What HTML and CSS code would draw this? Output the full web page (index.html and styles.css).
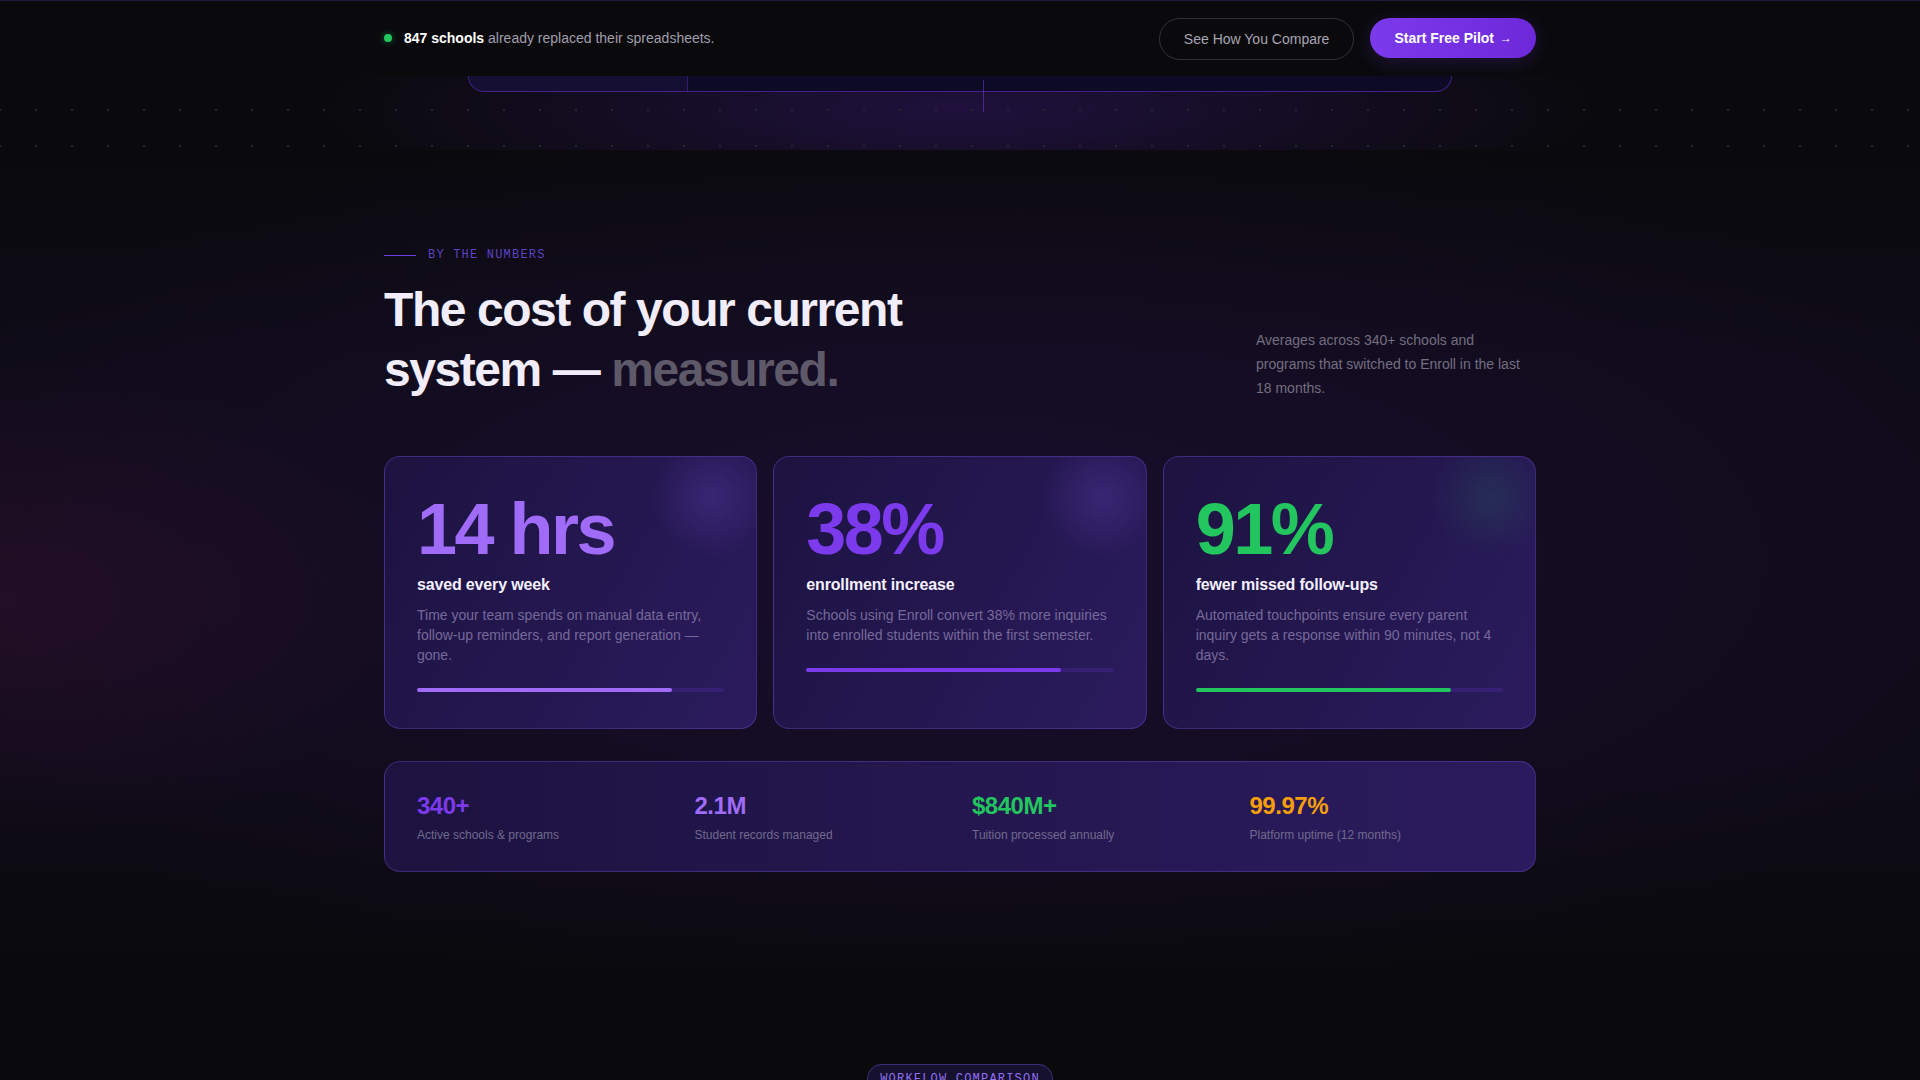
FILE: index.html
```html
<!DOCTYPE html>
<html lang="en">

<head>
    <meta charset="utf-8">
    <title>Enroll — By the numbers</title>
    <link rel="stylesheet" href="styles.css">
</head>

<body>
    <header class="topbar">
        <div class="topbar-inner">
            <p class="proof">
                <span class="live-dot"></span>
                <span><strong>847 schools</strong> already replaced their spreadsheets.</span>
            </p>
            <div class="topbar-actions">
                <a class="btn btn-ghost">See How You Compare</a>
                <a class="btn btn-primary">Start Free Pilot <span class="arrow">→</span></a>
            </div>
        </div>
    </header>

    <!-- bottom of the hero: product window peeking out -->
    <section class="hero">
        <div class="mock">
            <div class="mock-side"></div>
            <div class="mock-main"><span class="mock-tick"></span></div>
        </div>
    </section>

    <section class="numbers">
        <div class="container">
            <div class="numbers-head">
                <div>
                    <p class="eyebrow">By the numbers</p>
                    <h2 class="numbers-title">The cost of your current<br>system — <span class="muted">measured.</span></h2>
                </div>
                <p class="numbers-note">Averages across 340+ schools and programs that switched to Enroll in the last 18 months.</p>
            </div>

            <div class="stat-cards">
                <div class="stat-card lilac">
                    <div class="stat-value">14 hrs</div>
                    <h3 class="stat-label">saved every week</h3>
                    <p class="stat-desc">Time your team spends on manual data entry, follow-up reminders, and report generation — gone.</p>
                    <div class="stat-bar"><span style="width: 83%"></span></div>
                </div>
                <div class="stat-card violet">
                    <div class="stat-value">38%</div>
                    <h3 class="stat-label">enrollment increase</h3>
                    <p class="stat-desc">Schools using Enroll convert 38% more inquiries into enrolled students within the first semester.</p>
                    <div class="stat-bar"><span style="width: 83%"></span></div>
                </div>
                <div class="stat-card green">
                    <div class="stat-value">91%</div>
                    <h3 class="stat-label">fewer missed follow-ups</h3>
                    <p class="stat-desc">Automated touchpoints ensure every parent inquiry gets a response within 90 minutes, not 4 days.</p>
                    <div class="stat-bar"><span style="width: 83%"></span></div>
                </div>
            </div>

            <div class="stat-strip">
                <div class="strip-item">
                    <div class="strip-value violet">340+</div>
                    <div class="strip-label">Active schools &amp; programs</div>
                </div>
                <div class="strip-item">
                    <div class="strip-value lilac">2.1M</div>
                    <div class="strip-label">Student records managed</div>
                </div>
                <div class="strip-item">
                    <div class="strip-value green">$840M+</div>
                    <div class="strip-label">Tuition processed annually</div>
                </div>
                <div class="strip-item">
                    <div class="strip-value amber">99.97%</div>
                    <div class="strip-label">Platform uptime (12 months)</div>
                </div>
            </div>
        </div>
    </section>

    <section class="workflow">
        <span class="pill">Workflow comparison</span>
    </section>
</body>

</html>
```

FILE: styles.css
```css
* {
    box-sizing: border-box;
}

body {
    margin: 0;
    background-color: #0a0a0d;
    font-family: "Liberation Sans", Arial, sans-serif;
    color: #f1edfb;
}

.container {
    max-width: 1152px;
    margin: 0 auto;
}

/* Sticky social proof bar */
.topbar {
    position: fixed;
    top: 0;
    left: 0;
    right: 0;
    z-index: 10;
    height: 76px;
    background-color: #0a0a0d;
    border-top: 1px solid #1f1a3a;
}

.topbar-inner {
    max-width: 1152px;
    height: 100%;
    margin: 0 auto;
    display: flex;
    align-items: center;
    justify-content: space-between;
}

.proof {
    margin: 0 0 1px;
    display: flex;
    align-items: center;
    gap: 12px;
    font-size: 14px;
    color: #a19dab;
}

.proof strong {
    color: #ffffff;
}

.live-dot {
    width: 8px;
    height: 8px;
    border-radius: 50%;
    background-color: #22c55e;
    box-shadow: 0 0 6px rgba(34, 197, 94, 0.5);
}

.topbar-actions {
    display: flex;
    gap: 16px;
}

.btn {
    display: inline-flex;
    align-items: center;
    gap: 6px;
    height: 42px;
    padding: 0 24px;
    border-radius: 999px;
    font-size: 14px;
    text-decoration: none;
    cursor: pointer;
}

.btn-ghost {
    border: 1px solid rgba(255, 255, 255, 0.16);
    color: #a8a4b2;
}

.btn-primary {
    height: 40px;
    background: linear-gradient(90deg, #7c3aed, #6d28d9);
    color: #ffffff;
    font-weight: 700;
    box-shadow: 0 4px 18px rgba(124, 58, 237, 0.2);
}

.arrow {
    font-size: 12px;
    font-weight: 400;
}

/* Hero tail with dotted grid */
.hero {
    height: 150px;
    overflow: hidden;
    display: flex;
    justify-content: center;
    background:
        radial-gradient(circle, #26242f 1px, transparent 1.6px) -18px -16px / 36px 36px,
        radial-gradient(ellipse 640px 120px at 50% 110px, rgba(80, 32, 170, 0.3), transparent),
        #0a0a0d;
}

.mock {
    position: relative;
    display: flex;
    width: 984px;
    height: 92px;
    background-color: #0c0a24;
    border: 1px solid rgba(124, 58, 237, 0.5);
    border-top: 0;
    border-radius: 0 0 16px 16px;
}

.mock-side {
    width: 219px;
    background-color: #150f33;
    border-right: 1px solid rgba(124, 58, 237, 0.3);
    border-bottom-left-radius: 16px;
}

.mock-main {
    flex: 1;
    position: relative;
}

/* connector line that runs past the window edge */
.mock::after {
    content: "";
    position: absolute;
    left: 514px;
    top: 80px;
    width: 1px;
    height: 32px;
    background-color: rgba(124, 58, 237, 0.5);
}

.mock-tick {
    position: absolute;
    right: 20px;
    top: 75px;
    width: 18px;
    height: 1px;
    background-color: rgba(124, 58, 237, 0.6);
}

/* By the numbers */
.numbers {
    padding: 96px 0;
    background:
        radial-gradient(ellipse 22% 30% at 0% 55%, rgba(150, 30, 110, 0.14), transparent),
        radial-gradient(ellipse 60% 55% at 50% 50%, rgba(76, 29, 149, 0.18), transparent),
        linear-gradient(#0a0a0d, #0e0b17 25%, #0e0b17 75%, #0a0a0d);
}

.numbers-head {
    display: flex;
    justify-content: space-between;
    align-items: flex-end;
}

.eyebrow {
    margin: 0 0 16px;
    display: flex;
    align-items: center;
    gap: 12px;
    font-family: "Liberation Mono", monospace;
    font-size: 12px;
    line-height: 18px;
    letter-spacing: 0.1em;
    text-transform: uppercase;
    color: #5d43c2;
}

.eyebrow::before {
    content: "";
    width: 32px;
    height: 1px;
    background-color: #6d3fe0;
}

.numbers-title {
    margin: 0;
    font-size: 48px;
    line-height: 60px;
    font-weight: 700;
    letter-spacing: -0.03em;
    color: #f1edfb;
}

.numbers-title .muted {
    color: #5e5969;
}

.numbers-note {
    margin: 0;
    max-width: 280px;
    font-size: 14px;
    line-height: 24px;
    color: #746e80;
}

.stat-cards {
    margin-top: 56px;
    display: grid;
    grid-template-columns: repeat(3, 1fr);
    gap: 16px;
}

.stat-card {
    --glow: rgba(139, 92, 246, 0.2);
    padding: 36px 32px;
    border: 1px solid rgba(139, 92, 246, 0.3);
    border-radius: 16px;
    background:
        radial-gradient(circle 60px at 88% 40px, var(--glow), transparent),
        linear-gradient(120deg, #1c1340, #2b1b5e);
}

.stat-card.green {
    --glow: rgba(34, 197, 94, 0.12);
}

.stat-value {
    font-size: 72px;
    line-height: 1;
    font-weight: 700;
    letter-spacing: -0.035em;
}

.stat-label {
    margin: 8px 0 0;
    font-size: 16px;
    line-height: 24px;
    letter-spacing: -0.01em;
    color: #f4f0ff;
}

.stat-desc {
    margin: 8px 0 0;
    font-size: 14px;
    line-height: 20px;
    color: #76699a;
}

.stat-bar {
    margin-top: 23px;
    height: 4px;
    border-radius: 2px;
    background-color: rgba(124, 58, 237, 0.18);
}

.stat-bar span {
    display: block;
    height: 100%;
    border-radius: 2px;
}

.lilac .stat-value,
.strip-value.lilac {
    color: #9f6bf7;
}

.lilac .stat-bar span {
    background-color: #9f6bf7;
}

.violet .stat-value,
.strip-value.violet {
    color: #7c3aed;
}

.violet .stat-bar span {
    background-color: #7c3aed;
}

.green .stat-value,
.strip-value.green {
    color: #22c55e;
}

.green .stat-bar span {
    background-color: #22c55e;
}

.strip-value.amber {
    color: #f59e0b;
}

/* Summary strip */
.stat-strip {
    margin-top: 32px;
    display: grid;
    grid-template-columns: repeat(4, 1fr);
    gap: 24px;
    padding: 29px 32px 27px;
    border: 1px solid rgba(139, 92, 246, 0.3);
    border-radius: 16px;
    background: linear-gradient(90deg, #1c1340, #2b1b5e);
}

.strip-value {
    font-size: 24px;
    line-height: 29px;
    font-weight: 700;
    letter-spacing: -0.02em;
}

.strip-label {
    margin-top: 6px;
    font-size: 12px;
    line-height: 18px;
    color: #716a8c;
}

/* Next section heading pill */
.workflow {
    padding: 96px 0;
    text-align: center;
}

.pill {
    display: inline-block;
    padding: 5px 12px;
    border: 1px solid rgba(139, 92, 246, 0.35);
    border-radius: 999px;
    background-color: #171130;
    font-family: "Liberation Mono", monospace;
    font-size: 12px;
    line-height: 18px;
    letter-spacing: 0.1em;
    text-transform: uppercase;
    color: #9170f0;
}
```
